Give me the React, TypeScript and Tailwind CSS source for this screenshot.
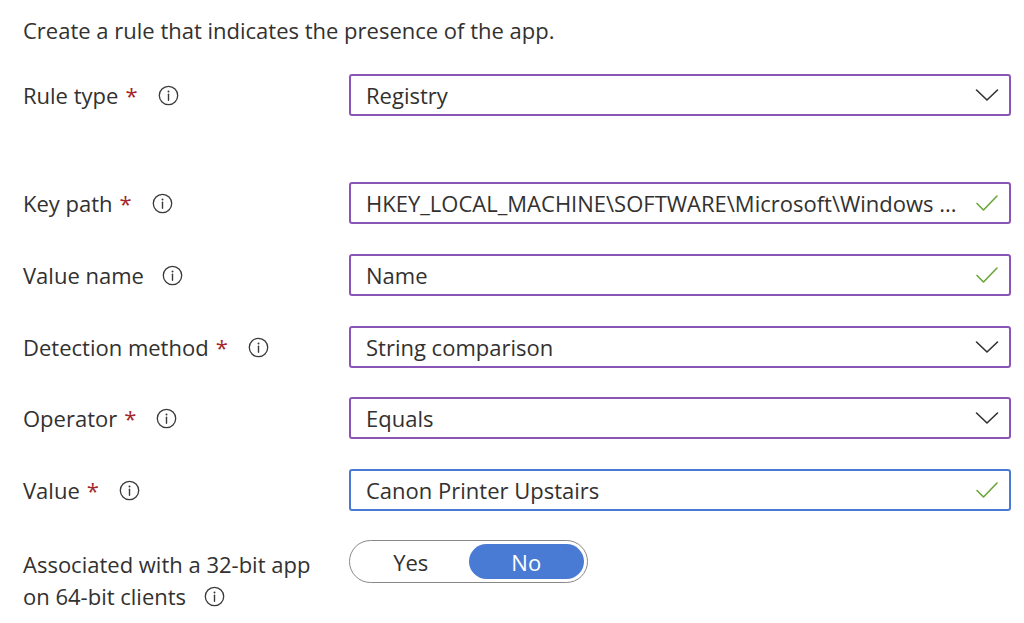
import React from 'react'

function InfoIcon() {
    return (
        <svg width="21" height="21" viewBox="0 0 21 21" fill="none" className="shrink-0">
            <circle cx="10.5" cy="10.5" r="9.2" stroke="#3b3a39" strokeWidth="1.3" />
            <circle cx="10.5" cy="6.6" r="1" fill="#3b3a39" />
            <path d="M10.5 9.2V15.2" stroke="#3b3a39" strokeWidth="1.4" strokeLinecap="round" />
        </svg>
    )
}

function Chevron() {
    return (
        <svg width="24" height="14" viewBox="0 0 24 14" fill="none" className="shrink-0">
            <path d="M1.5 2L12 12L22.5 2" stroke="#323130" strokeWidth="1.6" strokeLinejoin="round" strokeLinecap="round" />
        </svg>
    )
}

function Check() {
    return (
        <svg width="24" height="18" viewBox="0 0 24 18" fill="none" className="shrink-0">
            <path d="M2 9.5L8.5 16L22 2" stroke="#6ba539" strokeWidth="1.6" strokeLinejoin="round" strokeLinecap="round" />
        </svg>
    )
}

function Label({ text, required }: { text: string; required?: boolean }) {
    return (
        <div className="w-[326px] shrink-0 flex items-center text-[#323130]">
            <span>{text}</span>
            {required && <span className="text-[#a4262c] ml-[7px]">*</span>}
            <span className={required ? 'ml-[20px]' : 'ml-[18px]'}>
                <InfoIcon />
            </span>
        </div>
    )
}

function Field({ value, kind, focused }: { value: string; kind: 'select' | 'input'; focused?: boolean }) {
    return (
        <div
            className={
                'w-[662px] h-[42px] rounded-[3px] border-2 flex items-center justify-between pl-[15px] pr-[10px] ' +
                (focused ? 'border-[#4a7bd4]' : 'border-[#8b55b8]')
            }
        >
            <span className="whitespace-nowrap text-[#323130]">{value}</span>
            {kind === 'select' ? <Chevron /> : <Check />}
        </div>
    )
}

function Row({ children, top }: { children: React.ReactNode; top: string }) {
    return <div className={'flex items-center h-[42px] ' + top}>{children}</div>
}

export default function App() {
    return (
        <div
            className="w-[1024px] h-[623px] bg-white pl-[23px] pt-[16px] text-[22px] leading-[28px] overflow-hidden"
            style={{ fontFamily: '"Open Sans", "Noto Sans", sans-serif' }}
        >
            <div className="text-[#323130]">Create a rule that indicates the presence of the app.</div>

            <Row top="mt-[30px]">
                <Label text="Rule type" required />
                <Field value="Registry" kind="select" />
            </Row>

            <Row top="mt-[66px]">
                <Label text="Key path" required />
                <Field value="HKEY_LOCAL_MACHINE\SOFTWARE\Microsoft\Windows ..." kind="input" />
            </Row>

            <Row top="mt-[30px]">
                <Label text="Value name" />
                <Field value="Name" kind="input" />
            </Row>

            <Row top="mt-[30px]">
                <Label text="Detection method" required />
                <Field value="String comparison" kind="select" />
            </Row>

            <Row top="mt-[29px]">
                <Label text="Operator" required />
                <Field value="Equals" kind="select" />
            </Row>

            <Row top="mt-[30px]">
                <Label text="Value" required />
                <Field value="Canon Printer Upstairs" kind="input" focused />
            </Row>

            <div className="flex items-start mt-[29px]">
                <div className="w-[326px] shrink-0 pt-[8px] leading-[32px] text-[#323130]">
                    <div>Associated with a 32-bit app</div>
                    <div className="flex items-center">
                        on 64-bit clients
                        <span className="ml-[18px]">
                            <InfoIcon />
                        </span>
                    </div>
                </div>
                <div className="w-[239px] h-[43px] rounded-full border-[1.5px] border-[#8a8886] p-[3px] grid grid-cols-2">
                    <div className="flex items-center justify-center text-[#323130]">Yes</div>
                    <div className="flex items-center justify-center rounded-full bg-[#4a7bd4] text-white">No</div>
                </div>
            </div>
        </div>
    )
}
